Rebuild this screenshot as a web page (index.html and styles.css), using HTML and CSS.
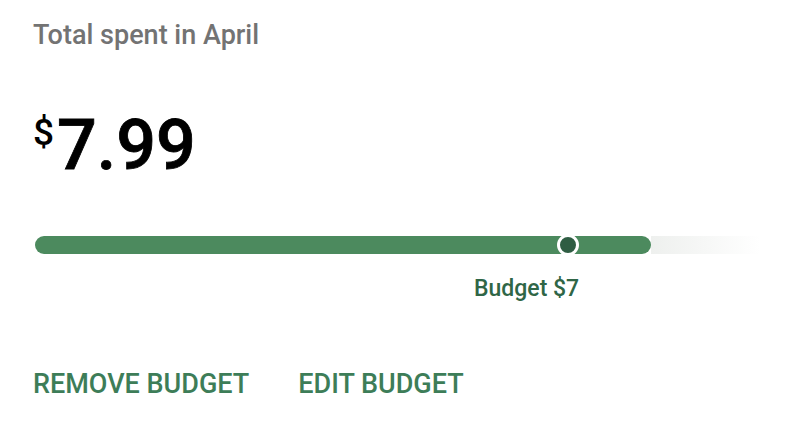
FILE: index.html
```html
<!DOCTYPE html>
<html lang="en">
<head>
    <meta charset="UTF-8">
    <meta name="viewport" content="width=device-width, initial-scale=1.0">
    <title>Budget</title>
    <link rel="stylesheet" href="styles.css">
</head>
<body>
    <div class="card">
        <h2 class="period">Total spent in April</h2>
        <div class="amount"><span class="currency">$</span>7.99</div>
        <div class="progress">
            <div class="track">
                <div class="fill"></div>
                <div class="tail"></div>
            </div>
            <div class="marker"></div>
        </div>
        <div class="budget-line">
            <span class="budget-label">Budget $7</span>
        </div>
        <div class="actions">
            <button class="text-button">REMOVE BUDGET</button>
            <button class="text-button">EDIT BUDGET</button>
        </div>
    </div>
</body>
</html>
```

FILE: styles.css
```css
body {
    margin: 0;
    padding: 0;
    background-color: #FFFFFF;
    font-family: Roboto, 'Noto Sans', sans-serif;
}

.card {
    padding: 19px 40px 0 33px;
}

.period {
    margin: 0;
    font-size: 27px;
    font-weight: 500;
    line-height: 32px;
    color: #737373;
}

.amount {
    margin-top: 54px;
    font-size: 70px;
    font-weight: 500;
    line-height: 80px;
    height: 80px;
    color: #000000;
    -webkit-text-stroke: 0.8px #000000;
}

.currency {
    font-size: 37px;
    vertical-align: top;
    line-height: 55px;
    margin-right: 3px;
    -webkit-text-stroke: 0;
}

.progress {
    position: relative;
    margin-top: 51px;
    margin-left: 2px;
    height: 18px;
}

.track {
    display: flex;
    height: 18px;
}

.fill {
    width: 622px;
    border-radius: 9px;
    background-color: #4C8A5E;
}

.tail {
    width: 110px;
    background: linear-gradient(to right, #EEF0EE, #FFFFFF);
}

/* budget point on the bar */
.marker {
    position: absolute;
    left: 522px;
    top: -2px;
    width: 16px;
    height: 16px;
    border: 3px solid #FFFFFF;
    border-radius: 50%;
    background-color: #2F5D43;
}

.budget-line {
    display: flex;
    padding-left: 441px;
    margin-top: 21px;
}

.budget-label {
    font-size: 23px;
    font-weight: 500;
    line-height: 28px;
    color: #2F6646;
}

.actions {
    display: flex;
    gap: 49px;
    margin-top: 65px;
}

.text-button {
    border: none;
    background: none;
    padding: 0;
    font-family: Roboto, 'Noto Sans', sans-serif;
    font-size: 27px;
    font-weight: 500;
    line-height: 32px;
    color: #3D7D58;
    cursor: pointer;
}
```
